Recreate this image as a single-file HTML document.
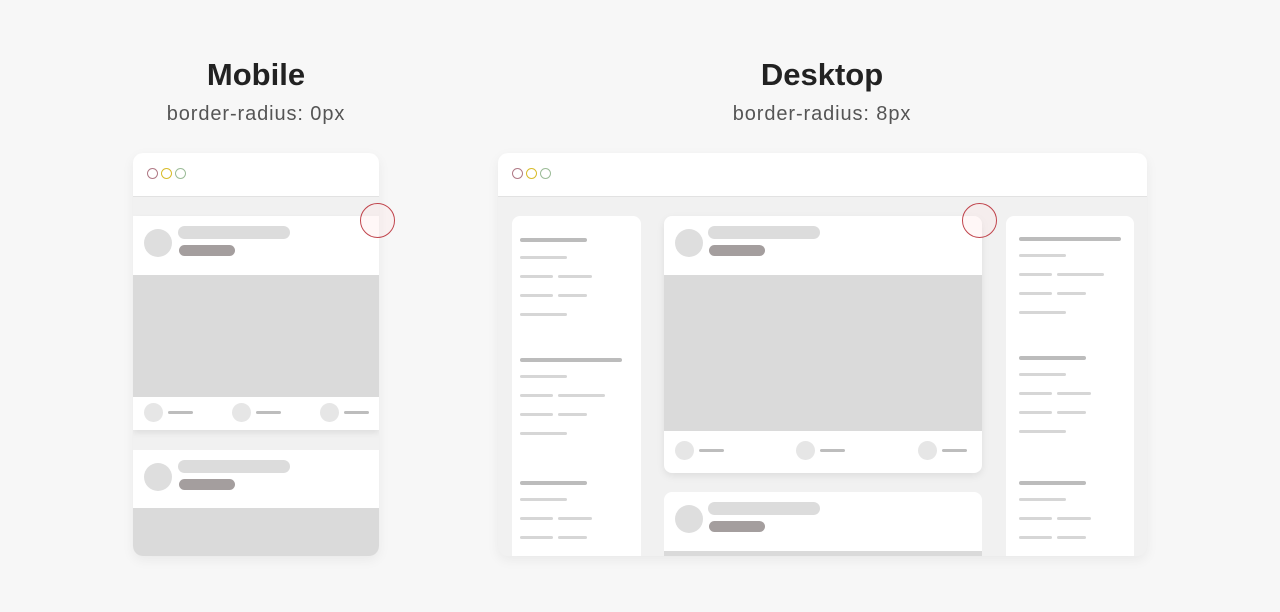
<!DOCTYPE html>
<html><head><meta charset="utf-8"><style>
*{margin:0;padding:0;box-sizing:border-box}
body{width:1280px;height:612px;background:#f7f7f7;position:relative;overflow:hidden;font-family:"Liberation Sans",sans-serif}
.t{position:absolute;font-weight:bold;font-size:31px;color:#222;text-align:center;width:300px}
.s{position:absolute;font-size:20px;letter-spacing:0.9px;color:#555;text-align:center;width:300px}
.win{position:absolute;background:#f1f1f1;overflow:hidden;box-shadow:0 4px 12px rgba(0,0,0,.06)}
.bar{position:absolute;left:0;top:0;right:0;height:44px;background:#fff;border-bottom:1px solid #e2e2e2}
.dot{position:absolute;top:15px;width:11px;height:11px;border-radius:50%;border:1.6px solid}
.w{position:absolute;background:#fff}
.av{position:absolute;width:28px;height:28px;border-radius:50%;background:#dedede}
.p1{position:absolute;height:13px;border-radius:7px;background:#dcdcdc;width:112px}
.p2{position:absolute;height:11px;border-radius:6px;background:#a49e9e;width:56px}
.img{position:absolute;background:#dadada}
.ic{position:absolute;width:19px;height:19px;border-radius:50%;background:#e6e6e6}
.il{position:absolute;height:3px;width:25px;background:#bdbdbd;border-radius:2px}
.L{position:absolute;height:4px;background:#bcbcbc;border-radius:2px}
.l{position:absolute;height:2.5px;background:#d6d6d6;border-radius:2px}
.rc{position:absolute;width:35px;height:35px;border-radius:50%;border:1.5px solid #c0444c;background:rgba(255,230,230,.3)}
</style></head><body>
<div class="t" style="left:106px;top:57px">Mobile</div>
<div class="s" style="left:106px;top:103px">border-radius: 0px</div>
<div class="t" style="left:672px;top:57px">Desktop</div>
<div class="s" style="left:672px;top:103px">border-radius: 8px</div>

<div class="win" style="left:133px;top:153px;width:246px;height:403px;border-radius:10px">
 <div class="bar"><div class="dot" style="left:14px;border-color:#b07a86"></div><div class="dot" style="left:28px;border-color:#d8bc2c"></div><div class="dot" style="left:42px;border-color:#9cbc98"></div></div>
 <div class="w" style="left:0;top:63px;width:246px;height:214px;box-shadow:0 3px 6px rgba(0,0,0,.08)">
  <div class="av" style="left:11px;top:13px"></div><div class="p1" style="left:45px;top:10px"></div><div class="p2" style="left:46px;top:29px"></div>
  <div class="img" style="left:0;top:59px;width:246px;height:122px"></div>
  <div class="ic" style="left:11px;top:187px"></div><div class="il" style="left:35px;top:195px"></div>
  <div class="ic" style="left:99px;top:187px"></div><div class="il" style="left:123px;top:195px"></div>
  <div class="ic" style="left:187px;top:187px"></div><div class="il" style="left:211px;top:195px"></div>
 </div>
 <div class="w" style="left:0;top:297px;width:246px;height:106px">
  <div class="av" style="left:11px;top:13px"></div><div class="p1" style="left:45px;top:10px"></div><div class="p2" style="left:46px;top:29px"></div>
  <div class="img" style="left:0;top:58px;width:246px;height:48px"></div>
 </div>
</div>
<div class="rc" style="left:360px;top:203px"></div>

<div class="win" style="left:498px;top:153px;width:649px;height:403px;border-radius:10px">
 <div class="bar"><div class="dot" style="left:14px;border-color:#b07a86"></div><div class="dot" style="left:28px;border-color:#d8bc2c"></div><div class="dot" style="left:42px;border-color:#9cbc98"></div></div>
 <div class="w" style="left:14px;top:63px;width:129px;height:360px;border-radius:8px"></div>
 <div class="w" style="left:508px;top:63px;width:128px;height:360px;border-radius:8px"></div>
 <div class="w" style="left:166px;top:63px;width:318px;height:257px;border-radius:8px;overflow:hidden;box-shadow:0 3px 8px rgba(0,0,0,.08)">
  <div class="av" style="left:11px;top:13px"></div><div class="p1" style="left:44px;top:10px"></div><div class="p2" style="left:45px;top:29px"></div>
  <div class="img" style="left:0;top:59px;width:318px;height:156px"></div>
  <div class="ic" style="left:11px;top:225px"></div><div class="il" style="left:35px;top:233px"></div>
  <div class="ic" style="left:132px;top:225px"></div><div class="il" style="left:156px;top:233px"></div>
  <div class="ic" style="left:254px;top:225px"></div><div class="il" style="left:278px;top:233px"></div>
 </div>
 <div class="w" style="left:166px;top:339px;width:318px;height:80px;border-radius:8px;overflow:hidden">
  <div class="av" style="left:11px;top:13px"></div><div class="p1" style="left:44px;top:10px"></div><div class="p2" style="left:45px;top:29px"></div>
  <div class="img" style="left:0;top:59px;width:318px;height:20px"></div>
 </div>
</div>
<div class="rc" style="left:962px;top:203px"></div>

<div class="L" style="left:520px;top:238px;width:67px"></div>
<div class="l" style="left:520px;top:256px;width:47px"></div>
<div class="l" style="left:520px;top:275px;width:33px"></div><div class="l" style="left:558px;top:275px;width:34px"></div>
<div class="l" style="left:520px;top:294px;width:33px"></div><div class="l" style="left:558px;top:294px;width:29px"></div>
<div class="l" style="left:520px;top:313px;width:47px"></div>
<div class="L" style="left:520px;top:358px;width:102px"></div>
<div class="l" style="left:520px;top:375px;width:47px"></div>
<div class="l" style="left:520px;top:394px;width:33px"></div><div class="l" style="left:558px;top:394px;width:47px"></div>
<div class="l" style="left:520px;top:413px;width:33px"></div><div class="l" style="left:558px;top:413px;width:29px"></div>
<div class="l" style="left:520px;top:432px;width:47px"></div>
<div class="L" style="left:520px;top:481px;width:67px"></div>
<div class="l" style="left:520px;top:498px;width:47px"></div>
<div class="l" style="left:520px;top:517px;width:33px"></div><div class="l" style="left:558px;top:517px;width:34px"></div>
<div class="l" style="left:520px;top:536px;width:33px"></div><div class="l" style="left:558px;top:536px;width:29px"></div>

<div class="L" style="left:1019px;top:237px;width:102px"></div>
<div class="l" style="left:1019px;top:254px;width:47px"></div>
<div class="l" style="left:1019px;top:273px;width:33px"></div><div class="l" style="left:1057px;top:273px;width:47px"></div>
<div class="l" style="left:1019px;top:292px;width:33px"></div><div class="l" style="left:1057px;top:292px;width:29px"></div>
<div class="l" style="left:1019px;top:311px;width:47px"></div>
<div class="L" style="left:1019px;top:356px;width:67px"></div>
<div class="l" style="left:1019px;top:373px;width:47px"></div>
<div class="l" style="left:1019px;top:392px;width:33px"></div><div class="l" style="left:1057px;top:392px;width:34px"></div>
<div class="l" style="left:1019px;top:411px;width:33px"></div><div class="l" style="left:1057px;top:411px;width:29px"></div>
<div class="l" style="left:1019px;top:430px;width:47px"></div>
<div class="L" style="left:1019px;top:481px;width:67px"></div>
<div class="l" style="left:1019px;top:498px;width:47px"></div>
<div class="l" style="left:1019px;top:517px;width:33px"></div><div class="l" style="left:1057px;top:517px;width:34px"></div>
<div class="l" style="left:1019px;top:536px;width:33px"></div><div class="l" style="left:1057px;top:536px;width:29px"></div>
</body></html>
